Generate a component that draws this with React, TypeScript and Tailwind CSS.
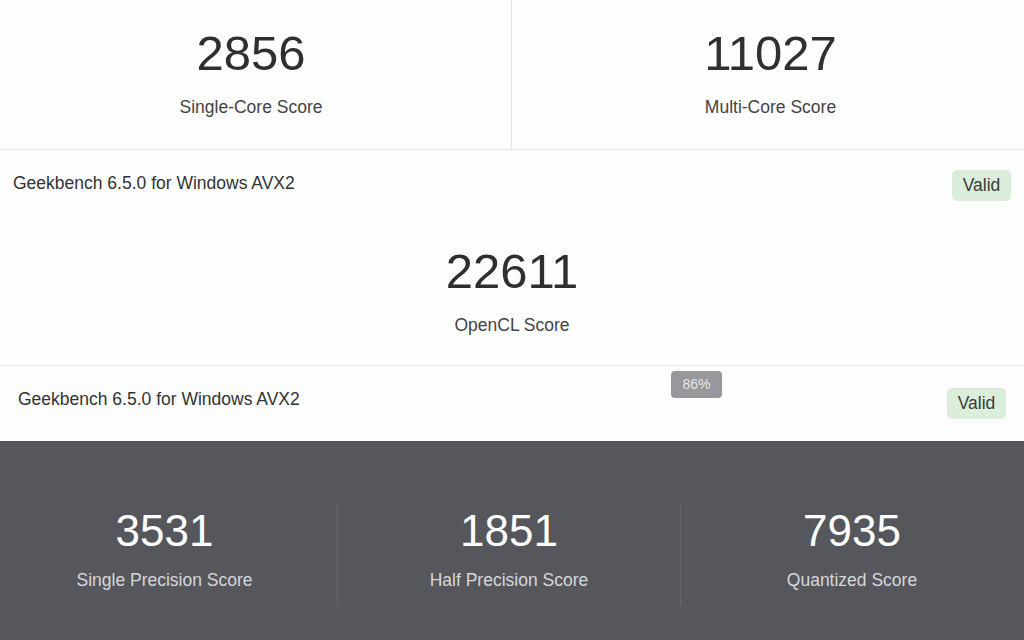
const font = { fontFamily: '"Liberation Sans", Arial, sans-serif' };

function Score({ value, label }: { value: string; label: string }) {
  return (
    <div className="flex flex-col items-center">
      <div className="text-[49px] leading-[50px] text-[#2f2f2f]">{value}</div>
      <div className="mt-[19px] text-[17.5px] leading-[20px] text-[#444]">{label}</div>
    </div>
  );
}

function Valid({ className = "" }: { className?: string }) {
  return (
    <span
      className={
        "flex h-[31px] w-[59px] items-center justify-center rounded-[5px] bg-[#dbeedc] text-[17.5px] text-[#3a3a3a] " +
        className
      }
    >
      Valid
    </span>
  );
}

function DarkScore({ value, label, divided }: { value: string; label: string; divided?: boolean }) {
  return (
    <div
      className={
        "flex flex-col items-center pb-[15px] pt-[2px] " +
        (divided ? "border-x border-[#66676c]" : "")
      }
    >
      <div className="text-[44px] leading-[52px] text-white">{value}</div>
      <div className="mt-[13px] text-[17.5px] leading-[20px] text-[#d6d6da]">{label}</div>
    </div>
  );
}

export default function App() {
  return (
    <div className="h-[640px] w-[1024px] overflow-hidden bg-[#fdfdfd]" style={font}>
      <div className="grid h-[150px] grid-cols-2 border-b border-[#e4e4e4]">
        <div className="border-r border-[#e4e4e4] pr-[9px] pt-[28px]">
          <Score value="2856" label="Single-Core Score" />
        </div>
        <div className="pl-[5px] pt-[28px]">
          <Score value="11027" label="Multi-Core Score" />
        </div>
      </div>

      <div className="h-[216px] border-b border-[#e8e8e8] px-[13px] pt-[20px]">
        <div className="flex items-start justify-between">
          <span className="pt-[3px] text-[17.5px] leading-[20px] text-[#333]">
            Geekbench 6.5.0 for Windows AVX2
          </span>
          <Valid />
        </div>
        <div className="mt-[45px]">
          <Score value="22611" label="OpenCL Score" />
        </div>
      </div>

      <div className="relative flex h-[75px] items-start justify-between pl-[18px] pr-[18px] pt-[20px]">
        <span className="pt-[3px] text-[17.5px] leading-[20px] text-[#333]">
          Geekbench 6.5.0 for Windows AVX2
        </span>
        <span className="absolute left-[671px] top-[5px] flex h-[27px] w-[51px] items-center justify-center rounded-[4px] bg-[#98979c] text-[14px] text-[#e6e6e8]">
          86%
        </span>
        <Valid className="mt-[2px]" />
      </div>

      <div className="h-[200px] bg-[#56575c] pt-[62px]">
        <div className="grid grid-cols-[337px_344px_343px]">
          <div className="pr-[8px]">
            <DarkScore value="3531" label="Single Precision Score" />
          </div>
          <DarkScore value="1851" label="Half Precision Score" divided />
          <div className="-ml-px">
            <DarkScore value="7935" label="Quantized Score" />
          </div>
        </div>
      </div>
    </div>
  );
}
